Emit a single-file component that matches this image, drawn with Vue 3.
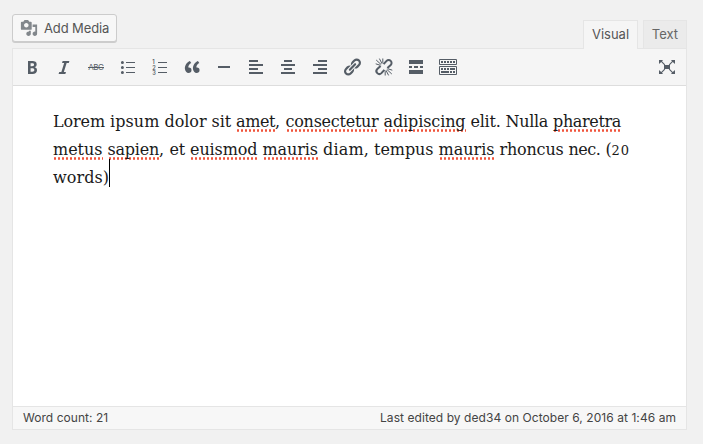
<script setup>
const sheet = document.createElement('canvas').getContext('2d')
const FONT = '16px "DejaVu Serif", serif'

// [word, advance to the next word, flagged by the spell checker, trailing punctuation]
const rows = [
  [['Lorem', 57], ['ipsum', 54.5], ['dolor', 47], ['sit', 24.5], ['amet', 39, 1, ','], ['consectetur', 98, 1], ['adipiscing', 87, 1], ['elit.', 35], ['Nulla', 47.5], ['pharetra', 73, 1]],
  [['metus', 54.5, 1], ['sapien', 51.5, 1, ','], ['et', 20.5], ['euismod', 72.5, 1], ['mauris', 60.5, 1], ['diam,', 51], ['tempus', 64.5], ['mauris', 61, 1], ['rhoncus', 69], ['nec.', 37], ['(20', 31]],
  [['words)', 61]],
]
const lines = rows.map((row) => row.map(([text, advance, bad, tail]) => {
  const gap = 5
  const width = tail ? advance : advance - gap
  const lining = text === '(20'
  sheet.font = FONT
  const natural = sheet.measureText(text).width
  return {
    text: lining ? '(' : text, digits: lining ? '20' : '', tail, bad: !!bad,
    style: { width: width + 'px', marginRight: (tail ? 10.5 : gap) + 'px', letterSpacing: (width - natural) / text.length + 'px' },
  }
}))

const icons = [
  { name: 'Bold', d: 'M6 4v13h4.54c1.37 0 2.46-.33 3.26-1 .8-.66 1.2-1.58 1.2-2.77 0-.84-.17-1.51-.51-2.01s-.9-.85-1.67-1.03v-.09c.57-.1 1.02-.4 1.36-.9s.51-1.13.51-1.91c0-1.14-.39-1.98-1.17-2.5C12.75 4.26 11.5 4 9.78 4H6zm2.57 5.15V6.26h1.36c.73 0 1.27.11 1.61.32.34.22.51.58.51 1.07 0 .54-.16.92-.47 1.15s-.82.35-1.51.35h-1.4zm0 2.19h1.6c1.44 0 2.16.53 2.16 1.61 0 .6-.17 1.05-.51 1.34s-.86.43-1.57.43H8.57v-3.38z' },
  { name: 'Italic', d: 'M14.78 6h-2.13l-2.8 9h2.12l-.62 2H4.6l.62-2h2.14l2.8-9H8.03l.62-2h6.75z' },
  { name: 'Strikethrough', abc: true },
  { name: 'Bulleted list', d: 'M2.9 5.5a1.5 1.5 0 1 1 3 0a1.5 1.5 0 1 1-3 0zM2.9 10.5a1.5 1.5 0 1 1 3 0a1.5 1.5 0 1 1-3 0zM2.9 15.5a1.5 1.5 0 1 1 3 0a1.5 1.5 0 1 1-3 0zM8 5h9v1H8zM8 10h9v1H8zM8 15h9v1H8z' },
  { name: 'Numbered list', d: 'M8 5h9v1H8zM8 10h9v1H8zM8 15h9v1H8z', nums: true },
  { name: 'Blockquote', d: 'M9.49 13.22c0-.74-.2-1.38-.61-1.9-.62-.78-1.83-.88-2.53-.72-.29-1.65 1.11-3.75 2.92-4.65L7.88 4c-2.73 1.3-5.42 4.28-4.96 8.05C3.21 14.43 4.59 16 6.54 16c.85 0 1.56-.25 2.12-.75s.83-1.18.83-2.03zm8.05 0c0-.74-.2-1.38-.61-1.9-.63-.78-1.83-.88-2.53-.72-.29-1.65 1.11-3.75 2.92-4.65L15.93 4c-2.73 1.3-5.41 4.28-4.95 8.05.29 2.38 1.66 3.95 3.61 3.95.85 0 1.56-.25 2.12-.75s.83-1.18.83-2.03z' },
  { name: 'Horizontal line', d: 'M4 9h12v2H4z' },
  { name: 'Align left', d: 'M3 3h9v2H3zM3 7h14v2H3zM3 11h9v2H3zM3 15h14v2H3z' },
  { name: 'Align center', d: 'M6 3h8v2H6zM3 7h14v2H3zM6 11h8v2H6zM3 15h14v2H3z' },
  { name: 'Align right', d: 'M8 3h9v2H8zM3 7h14v2H3zM8 11h9v2H8zM3 15h14v2H3z' },
  { name: 'Insert link', d: 'M17.74 2.76c1.68 1.69 1.68 4.41 0 6.1l-1.53 1.52c-1.12 1.12-2.7 1.47-4.14 1.09l2.62-2.61.76-.77.76-.76c.84-.84.84-2.2 0-3.04-.84-.85-2.2-.85-3.04 0l-.77.76-3.38 3.38c-.37-1.44-.02-3.02 1.1-4.14l1.52-1.53c1.69-1.68 4.42-1.68 6.1 0zM8.59 13.43l5.34-5.34c.42-.42.42-1.1 0-1.52-.44-.43-1.13-.39-1.53 0l-5.33 5.34c-.42.42-.42 1.1 0 1.52.44.43 1.13.39 1.52 0zm-.76 2.29l4.14-4.15c.38 1.44.03 3.02-1.09 4.14l-1.52 1.53c-1.69 1.68-4.41 1.68-6.1 0-1.68-1.68-1.68-4.42 0-6.1l1.53-1.52c1.12-1.12 2.7-1.47 4.14-1.1l-4.14 4.15c-.85.84-.85 2.2 0 3.05.84.84 2.2.84 3.04 0z' },
  { name: 'Remove link', unlink: true },
  { name: 'Read more', d: 'M3 3h14v4H3zM3 9h3v2H3zM8 9h4v2H8zM14 9h3v2h-3zM3 13h14v4H3z' },
  { name: 'Toolbar toggle', keys: true },
]
</script>

<template>
  <div class="page">
    <header class="tools">
      <button class="media">
        <svg viewBox="0 0 20 20"><path d="M13 11V4c0-.55-.45-1-1-1h-1.67L9 1H5L3.67 3H2c-.55 0-1 .45-1 1v7c0 .55.45 1 1 1h10c.55 0 1-.45 1-1zM7 4.5c1.38 0 2.5 1.12 2.5 2.5S8.38 9.5 7 9.5 4.5 8.38 4.5 7 5.62 4.5 7 4.5zM14 6h5v10.5c0 1.38-1.12 2.5-2.5 2.5S14 17.88 14 16.5s1.12-2.5 2.5-2.5c.17 0 .34.02.5.05V9h-3V6zm-4 8.05V13h2v3.5c0 1.38-1.12 2.5-2.5 2.5S7 17.88 7 16.5 8.12 14 9.5 14c.17 0 .34.02.5.05z" /></svg>
        <span>Add Media</span>
      </button>
      <nav class="tabs">
        <button class="tab active">Visual</button>
        <button class="tab">Text</button>
      </nav>
    </header>
    <section class="editor">
      <div class="toolbar">
        <button v-for="icon in icons" :key="icon.name" class="tool">
          <svg viewBox="0 0 20 20">
            <path v-if="icon.d" :d="icon.d" />
            <g v-if="icon.abc"><text x="2.2" y="13" class="abc" textLength="15.6">ABC</text><path d="M2 10h16v1H2z" /></g>
            <g v-if="icon.nums" class="nums"><text x="2.2" y="7.3">1</text><text x="2.2" y="12.5">2</text><text x="2.2" y="17.7">3</text></g>
            <g v-if="icon.unlink" class="stroke">
              <path d="M9.6 7.2l3-3.3a2.8 2.8 0 0 1 4.1 4.1l-3.3 3.1M10.4 12.8l-3 3.3a2.8 2.8 0 0 1-4.1-4.1l3.3-3.1" />
              <path class="ray" d="M2.2 3l5 4.6M5.4 1.6l2.7 5.2M8.8 1.5v4.4M1.7 6.8l4.7 1.5M17.8 17l-5-4.6M14.6 18.4l-2.7-5.2M11.2 18.5v-4.4M18.3 13.2l-4.7-1.5" />
            </g>
            <g v-if="icon.keys" class="keys">
              <path d="M1.5 2.5h17v5h-17zM1.5 9.5h17v8h-17z" />
              <path class="dots" d="M3 5h14M3 12h8" />
              <path d="M12 12h5M3 15h8" class="bar" />
              <path class="dots" d="M12 15h5" />
            </g>
          </svg>
        </button>
        <button class="tool full">
          <svg viewBox="0 0 20 20"><path d="M7 8h6v4H7zM2 3h4L5 4.3 8.2 7.4 7.4 8.2 4.2 5 2 7zM18 3v4l-2.2-2L12.6 8.2l-.8-.8L15 4.3 14 3zM2 17v-4l2.2 2 3.2-3.2.8.8L5 15.7 6 17zM18 17h-4l1-1.3-3.2-3.1.8-.8 3.2 3.2L18 13z" /></svg>
        </button>
      </div>
      <div class="content">
        <p v-for="(line, i) in lines" :key="i" class="line">
          <span v-for="(w, j) in line" :key="j" class="word" :class="{ bad: w.bad }" :style="w.style">{{ w.text }}<span v-if="w.digits" class="digits">{{ w.digits }}</span><span v-if="w.tail" class="tail">{{ w.tail }}</span></span>
          <i v-if="i === lines.length - 1" class="caret"></i>
        </p>
      </div>
      <footer class="status"><span class="count">Word count: 21</span><span class="edited">Last edited by ded34 on October 6, 2016 at 1:46 am</span></footer>
    </section>
  </div>
</template>

<style>
body { background: #f1f1f1; }
</style>
<style scoped>
.page { box-sizing: border-box; width: 703px; height: 444px; padding: 14px 16px 14px 12px; background: #f1f1f1; font-family: Inter, sans-serif; overflow: hidden; }
button { font-family: inherit; margin: 0; padding: 0; box-sizing: border-box; border: 0; background: none; }
.tools { display: flex; justify-content: space-between; height: 34px; }
.media { display: flex; align-items: center; width: 105px; height: 28px; padding: 0 0 0 7px; gap: 6px; border: 1px solid #ccc; border-radius: 3px; background: #f7f7f7; box-shadow: 0 1px 0 #ccc; color: #555; font-size: 13px; white-space: nowrap; }
.media svg { width: 18px; height: 18px; fill: #82878c; flex: none; }
.media span { letter-spacing: -0.12px; }
.tabs { display: flex; gap: 5px; padding-top: 6px; }
.tab { width: 44px; height: 28px; border: 1px solid #e5e5e5; border-bottom: 0; background: #ebebeb; color: #666; font-size: 13px; padding-bottom: 1px; }
.tab.active { width: 55px; height: 29px; background: #f5f5f5; color: #555; position: relative; z-index: 1; padding-bottom: 2px; }
.editor { box-sizing: border-box; width: 675px; height: 382px; border: 1px solid #e5e5e5; display: flex; flex-direction: column; background: #fff; }
.toolbar { height: 36px; border-bottom: 1px solid #ddd; background: #f5f5f5; display: flex; align-items: center; gap: 12px; padding: 0 9px; }
.tool { width: 20px; height: 20px; flex: none; }
.tool svg { display: block; width: 20px; height: 20px; fill: #555d66; overflow: visible; }
.full { margin-left: auto; }
.abc { font: 8px Inter, sans-serif; }
.nums { font: 600 5.6px Inter, sans-serif; }
.stroke { fill: none; stroke: #555d66; stroke-width: 2; }
.ray { stroke-width: 1; }
.keys { fill: none; stroke: #555d66; stroke-width: 1; }
.dots { stroke-width: 2; stroke-dasharray: 2 1; }
.bar { stroke-width: 2; }
.content { flex: 1; padding: 21px 40px; color: #1a1a1a; font: 16px "DejaVu Serif", serif; }
.line { display: flex; margin: 0; height: 28px; line-height: 29px; white-space: nowrap; }
.word { flex: none; height: 28px; }
.digits { font-size: 13px; letter-spacing: 1px; }
.bad { background: radial-gradient(circle, #f0543c 1px, transparent 1.5px) 0 22px / 4px 3px repeat-x; }
.caret { width: 1px; height: 28px; background: #000; margin: -4px 0 0 -5px; }
.status { height: 22px; border-top: 1px solid #e5e5e5; background: #f7f7f7; display: flex; align-items: center; justify-content: space-between; padding: 0 10px; color: #444; font-size: 12px; }
.status span { padding-bottom: 2px; }
.count { letter-spacing: 0.04px; }
.edited { letter-spacing: 0.06px; }
</style>
